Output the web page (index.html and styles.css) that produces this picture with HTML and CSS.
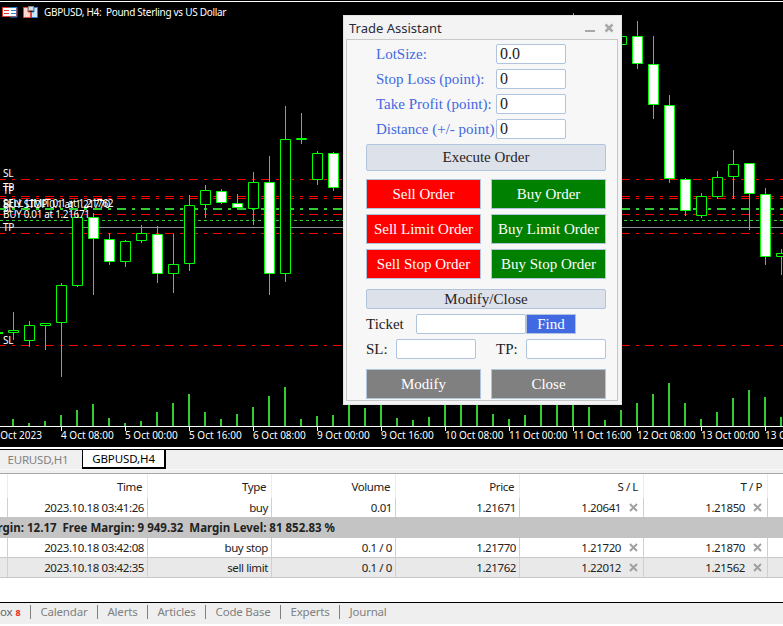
FILE: index.html
```html
<!DOCTYPE html>
<html lang="en">
<head>
<meta charset="utf-8">
<title>Trade Assistant</title>
<link rel="stylesheet" href="styles.css">
</head>
<body>
<main class="terminal">
  <section class="chart">
    <svg class="chart-svg" width="783" height="447" viewBox="0 0 783 447">
      <path class="top-line" d="M0 1.5H783"/>
      <g class="icons">
        <rect x="2.5" y="7.5" width="14" height="9" fill="#fff" stroke="#e03a30"/>
        <path d="M10 7.5H17V17H10" fill="none" stroke="#2a7fd0"/>
        <path d="M4 10.5H9M4 13.5H9" stroke="#e03a30"/>
        <path d="M11 10.5H16M11 13.5H16" stroke="#2a7fd0"/>
        <path d="M23.5 7.5H28V12H30.5V17.5H23.5Z" fill="#fbd5cf" stroke="#d9483c"/>
        <path d="M37.5 7.5H34V12H31.5V17.5H37.5Z" fill="#cfe6fa" stroke="#2a7fd0"/>
        <rect x="28.5" y="6.5" width="5" height="4" fill="#ddd" stroke="#888"/>
      </g>
      <text class="title-text" x="44" y="16">GBPUSD, H4:  Pound Sterling vs US Dollar</text>
      <path class="line-red" d="M0 179.5H783M0 196.5H783M0 198.5H783M0 214.5H783M0 233.5H783M0 345.5H783"/>
      <path class="line-green-thick" d="M0 209H783"/>
      <path class="line-green-dash" d="M0 220.5H783"/>
      <path class="line-gray" d="M0 227.5H783"/>
      <path class="wick" d="M13.5 312V340M29.5 321V347M45.5 323V350M61.5 283V377M77.5 212V287M93.5 213V295M109.5 233V265M125.5 240V267M141.5 225V243M157.5 226V283M173.5 234V293M189.5 195V271M205.5 185V218M221.5 189V204M237.5 194V209M253.5 172V225M269.5 156V295M285.5 106V282M301.5 113V144M317.5 151V185M333.5 152V191M573.5 13V16M637.5 21V69M653.5 36V119M669.5 95V183M685.5 178V216M701.5 193V218M717.5 171V199M733.5 150V199M749.5 163V230M765.5 188V265M781.5 249V275"/>
      <path class="body-hollow" d="M8.5 330.5h10v2h-10zM24.5 325.5h10v15h-10zM40.5 323.5h10v2h-10zM56.5 285.5h10v37h-10zM72.5 217.5h10v68h-10zM120.5 241.5h10v20h-10zM136.5 233.5h10v7h-10zM168.5 264.5h10v9h-10zM184.5 205.5h10v58h-10zM200.5 190.5h10v14h-10zM248.5 182.5h10v26h-10zM280.5 139.5h10v134h-10zM296.5 138.5h10v1h-10zM312.5 153.5h10v26h-10zM616.5 36.5h10v8h-10zM696.5 196.5h10v19h-10zM712.5 177.5h10v19h-10zM728.5 164.5h10v12h-10zM776.5 253.5h10v3h-10z"/>
      <path class="body-white" d="M88.5 217.5h10v21h-10zM104.5 239.5h10v22h-10zM152.5 234.5h10v39h-10zM216.5 191.5h10v11h-10zM232.5 203.5h10v4h-10zM264.5 182.5h10v91h-10zM328.5 153.5h10v34h-10zM632.5 36.5h10v27h-10zM648.5 64.5h10v40h-10zM664.5 105.5h10v73h-10zM680.5 179.5h10v31h-10zM744.5 163.5h10v30h-10zM760.5 194.5h10v62h-10z"/>
      <path class="stub" d="M0 333H3"/>
      <path class="volume" d="M13 419V426M29 423V426M45 421V426M61 415V426M77 410V426M93 404V426M109 418V426M125 423V426M141 421V426M157 412V426M173 403V426M189 394V426M205 412V426M221 419V426M237 414V426M253 407V426M269 396V426M285 387V426M301 419V426M317 416V426M333 415V426M349 400V426M365 408V426M381 400V426M397 418V426M413 420V426M429 417V426M445 400V426M461 400V426M477 400V426M493 414V426M509 419V426M525 415V426M541 400V426M557 400V426M573 400V426M589 407V426M605 420V426M621 410V426M637 403V426M653 394V426M669 383V426M685 403V426M701 419V426M717 412V426M733 398V426M749 390V426M765 397V426M781 417V426"/>
      <path class="axis" d="M0 426.5H783M61.5 426V431M125.5 426V431M189.5 426V431M253.5 426V431M317.5 426V431M381.5 426V431M445.5 426V431M509.5 426V431M573.5 426V431M637.5 426V431M701.5 426V431M765.5 426V431"/>
      <g class="labels trade-labels">
        <text x="3" y="177">SL</text>
        <text x="3" y="194">TP</text>
        <text x="3" y="191">TP</text>
        <text x="3" y="212">SL</text>
        <text x="3" y="207">SELL LIMIT 0.1 at 1.21762</text>
        <text x="3" y="207.5">BUY STOP 0.1 at 1.21770</text>
        <text x="3" y="218">BUY 0.01 at 1.21671</text>
        <text x="3" y="231">TP</text>
        <text x="3" y="344">SL</text>
      </g>
      <g class="labels">
        <text x="42" y="439" class="end">3 Oct 2023</text>
        <text x="61" y="439">4 Oct 08:00</text>
        <text x="125" y="439">5 Oct 00:00</text>
        <text x="189" y="439">5 Oct 16:00</text>
        <text x="253" y="439">6 Oct 08:00</text>
        <text x="317" y="439">9 Oct 00:00</text>
        <text x="381" y="439">9 Oct 16:00</text>
        <text x="445" y="439">10 Oct 08:00</text>
        <text x="509" y="439">11 Oct 00:00</text>
        <text x="573" y="439">11 Oct 16:00</text>
        <text x="637" y="439">12 Oct 08:00</text>
        <text x="701" y="439">13 Oct 00:00</text>
        <text x="765" y="439">13 Oct 16:00</text>
      </g>
    </svg>

    <aside class="panel">
      <header class="panel-head">
        <span class="panel-title">Trade Assistant</span>
        <svg class="panel-controls" width="30" height="12" viewBox="0 0 30 12">
          <path class="ctl-min" d="M0 9H10"/>
          <path class="ctl-close" d="M20.5 2.5L27.5 9.5M27.5 2.5L20.5 9.5"/>
        </svg>
      </header>
      <div class="panel-body">
        <div class="field"><label class="field-label">LotSize:</label><input class="input input-field" value="0.0"></div>
        <div class="field"><label class="field-label">Stop Loss (point):</label><input class="input input-field" value="0"></div>
        <div class="field"><label class="field-label">Take Profit (point):</label><input class="input input-field" value="0"></div>
        <div class="field"><label class="field-label">Distance (+/- point)</label><input class="input input-field" value="0"></div>
        <button class="btn btn-soft btn-exec">Execute Order</button>
        <div class="btn-grid">
          <button class="btn btn-red">Sell Order</button>
          <button class="btn btn-green">Buy Order</button>
          <button class="btn btn-red">Sell Limit Order</button>
          <button class="btn btn-green">Buy Limit Order</button>
          <button class="btn btn-red">Sell Stop Order</button>
          <button class="btn btn-green">Buy Stop Order</button>
        </div>
        <div class="band">Modify/Close</div>
        <div class="ticket-row">
          <label class="plain-label ticket-label">Ticket</label>
          <input class="input ticket-input">
          <button class="btn btn-find">Find</button>
        </div>
        <div class="sltp-row">
          <label class="plain-label sl-label">SL:</label>
          <input class="input sltp-input">
          <label class="plain-label tp-label">TP:</label>
          <input class="input sltp-input">
        </div>
        <div class="btn-grid action-grid">
          <button class="btn btn-gray">Modify</button>
          <button class="btn btn-gray">Close</button>
        </div>
      </div>
    </aside>
  </section>

  <nav class="chart-tabs">
    <span class="chart-tab chart-tab-dim">EURUSD,H1</span>
    <span class="chart-tab chart-tab-active">GBPUSD,H4</span>
  </nav>

  <section class="table">
    <div class="row row-head">
      <span class="cell"></span><span class="cell">Time</span><span class="cell">Type</span><span class="cell">Volume</span><span class="cell">Price</span><span class="cell">S / L</span><span class="cell">T / P</span><span class="cell"></span>
    </div>
    <div class="row">
      <span class="cell"></span><span class="cell">2023.10.18 03:41:26</span><span class="cell">buy</span><span class="cell">0.01</span><span class="cell">1.21671</span><span class="cell cell-x">1.20641<svg class="x" viewBox="0 0 9 9"><path d="M1 1L8 8M8 1L1 8"/></svg></span><span class="cell cell-x">1.21850<svg class="x" viewBox="0 0 9 9"><path d="M1 1L8 8M8 1L1 8"/></svg></span><span class="cell"></span>
    </div>
    <div class="summary"><span class="summary-text">rgin: 12.17  Free Margin: 9 949.32  Margin Level: 81 852.83 %</span></div>
    <div class="row row-lined">
      <span class="cell"></span><span class="cell">2023.10.18 03:42:08</span><span class="cell">buy stop</span><span class="cell">0.1 / 0</span><span class="cell">1.21770</span><span class="cell cell-x">1.21720<svg class="x" viewBox="0 0 9 9"><path d="M1 1L8 8M8 1L1 8"/></svg></span><span class="cell cell-x">1.21870<svg class="x" viewBox="0 0 9 9"><path d="M1 1L8 8M8 1L1 8"/></svg></span><span class="cell"></span>
    </div>
    <div class="row row-lined row-alt">
      <span class="cell"></span><span class="cell">2023.10.18 03:42:35</span><span class="cell">sell limit</span><span class="cell">0.1 / 0</span><span class="cell">1.21762</span><span class="cell cell-x">1.22012<svg class="x" viewBox="0 0 9 9"><path d="M1 1L8 8M8 1L1 8"/></svg></span><span class="cell cell-x">1.21562<svg class="x" viewBox="0 0 9 9"><path d="M1 1L8 8M8 1L1 8"/></svg></span><span class="cell"></span>
    </div>
  </section>

  <footer class="tool-tabs">
    <span class="tool-tab tool-tab-first">ox<b class="badge">8</b></span>
    <span class="tool-tab">Calendar</span>
    <span class="tool-tab">Alerts</span>
    <span class="tool-tab">Articles</span>
    <span class="tool-tab">Code Base</span>
    <span class="tool-tab">Experts</span>
    <span class="tool-tab tool-tab-last">Journal</span>
  </footer>
</main>
</body>
</html>
```
FILE: styles.css
```css
* { box-sizing: border-box; }
html, body { margin: 0; padding: 0; }
body { width: 783px; height: 626px; overflow: hidden; background: #fff; font-family: "Noto Sans", sans-serif; }
.terminal { display: flex; flex-direction: column; width: 783px; height: 626px; }

/* chart */
.chart { position: relative; height: 447px; flex: none; background: #000; }
.chart-svg { display: block; }
.top-line { stroke: #fff; stroke-width: 1; fill: none; }
.title-text { font: 10px "Noto Sans", sans-serif; letter-spacing: -0.3px; fill: #fff; white-space: pre; }
.labels text { font: 10px "Noto Sans", sans-serif; fill: #fff; }
.trade-labels text { letter-spacing: -0.35px; }
.labels .end { text-anchor: end; }
.line-red { stroke: #ff0000; fill: none; stroke-dasharray: 9 6 3 6; stroke-dashoffset: 3; }
.line-green-thick { stroke: #32cd32; stroke-width: 2; fill: none; stroke-dasharray: 9 6 3 6; stroke-dashoffset: 3; }
.line-green-dash { stroke: #32cd32; fill: none; stroke-dasharray: 3 3; }
.line-gray { stroke: #8a8f99; fill: none; }
.wick { stroke: #00ff00; fill: none; }
.body-hollow { stroke: #00ff00; fill: #000; }
.body-white { stroke: #00ff00; fill: #fff; }
.stub { stroke: #00ff00; stroke-width: 2; fill: none; }
.volume { stroke: #32cd32; stroke-width: 2; fill: none; }
.axis { stroke: #fff; fill: none; }

/* floating panel */
.panel { position: absolute; left: 343px; top: 15px; width: 279px; height: 390px; padding: 1px 3px 3px 2px; background: #f3f3f3; border: 1px solid #e4e4e4; display: flex; flex-direction: column; }
.panel-head { height: 22px; flex: none; display: flex; align-items: center; justify-content: space-between; padding: 0 3px 0 3px; }
.panel-title { font: 13px "Noto Sans", sans-serif; color: #2a2a3a; }
.panel-controls { display: block; }
.ctl-min { stroke: #a8a8a8; stroke-width: 2; fill: none; }
.ctl-close { stroke: #a8a8a8; stroke-width: 2.5; fill: none; }
.panel-body { flex: 1; background: #f7f7f7; border: 1px solid #c8c8c8; padding: 4px 11px 0 19px; display: flex; flex-direction: column; gap: 5px; font: 15px "Liberation Serif", serif; }
.field { display: flex; height: 20px; align-items: center; padding-left: 10px; }
.field-label { width: 120px; flex: none; color: #4169e1; white-space: nowrap; }
.input { height: 20px; padding: 0 3px; border: 1px solid #b0c4de; border-radius: 2px; background: #fff; color: #222; font: 16px "Liberation Serif", serif; outline: none; }
.input-field { width: 70px; }
.btn { border: 1px solid #b0c4de; padding: 0; font: 15px "Liberation Serif", serif; cursor: pointer; }
.btn-soft, .band { background: #dde1ea; color: #2a2222; }
.btn-exec { height: 27px; border-radius: 2px; flex: none; }
.btn-grid { display: grid; grid-template-columns: 115px 115px; column-gap: 10px; row-gap: 5px; grid-auto-rows: 30px; margin-top: 3px; }
.btn-red { background: #ff0000; color: #fff; }
.btn-green { background: #008000; color: #fff; }
.btn-gray { background: #808080; color: #fff; }
.btn-find { width: 50px; height: 20px; background: #4169e1; color: #fff; }
.band { height: 20px; flex: none; margin-top: 5px; text-align: center; line-height: 18px; border: 1px solid #b0c4de; border-radius: 2px; }
.ticket-row, .sltp-row { display: flex; align-items: center; height: 20px; }
.plain-label { color: #222; }
.ticket-label { width: 50px; }
.ticket-input { width: 110px; }
.sl-label { width: 30px; }
.tp-label { width: 30px; margin-left: 20px; }
.sltp-input { width: 80px; }
.action-grid { margin-top: 5px; }

/* tabs */
.chart-tabs { height: 21px; margin-top: 2px; flex: none; display: flex; background: #f0f0f0; border-top: 1px solid #000; border-bottom: 1px solid #fafafa; align-items: stretch; }
.chart-tab { width: 83px; display: flex; align-items: center; justify-content: center; font-size: 11.5px; letter-spacing: -0.1px; color: #808080; border-right: 1px solid #000; }
.chart-tab-dim { padding-right: 6px; letter-spacing: -0.2px; }
.chart-tab-active { background: #fff; color: #000; border-right: 2px solid #000; border-bottom: 2px solid #000; }

/* table */
.table { flex: none; height: 108px; padding-top: 3px; background: #f0f0f0; font-size: 11.5px; letter-spacing: -0.4px; color: #222; }
.row { display: grid; grid-template-columns: 8px 140px 124px 124px 124px 124px 124px 1fr; height: 19px; background: #fff; }
.row-head { height: 25px; border-top: 1px solid #a8a8a8; }
.row-lined { height: 20px; border-bottom: 1px solid #c8c8c8; }
.row-alt { background: #e9e9e9; }
.cell { display: flex; align-items: center; justify-content: flex-end; padding-right: 3px; border-right: 1px solid #d0d0d0; white-space: nowrap; }
.row-head .cell { padding-right: 5px; border-right-color: #ececec; }
.cell:last-child { border-right: 0; }
.cell-x { padding-right: 5px; }
.x { width: 9px; height: 9px; margin-left: 8px; flex: none; }
.x path { stroke: #a0a0a0; stroke-width: 2; fill: none; }
.summary { height: 21px; background: #c4c4c4; display: flex; align-items: center; }
.summary-text { width: 335px; flex: none; display: flex; justify-content: flex-end; font-weight: 700; letter-spacing: 0; white-space: pre; }

/* bottom tabs */
.tool-tabs { flex: none; margin-top: 24px; height: 22px; padding-bottom: 3px; display: flex; align-items: center; background: #efefef; border-top: 1px solid #000; font-size: 11.5px; letter-spacing: -0.2px; color: #808080; }
.tool-tab { height: 14px; line-height: 14px; padding: 0 9.5px; border-right: 1px solid #808080; white-space: nowrap; }
.tool-tab-first { width: 31px; padding: 0; color: #666; }
.tool-tab-last { border-right: 0; }
.badge { color: #ee2222; font-size: 9px; margin-left: 3px; }
```
